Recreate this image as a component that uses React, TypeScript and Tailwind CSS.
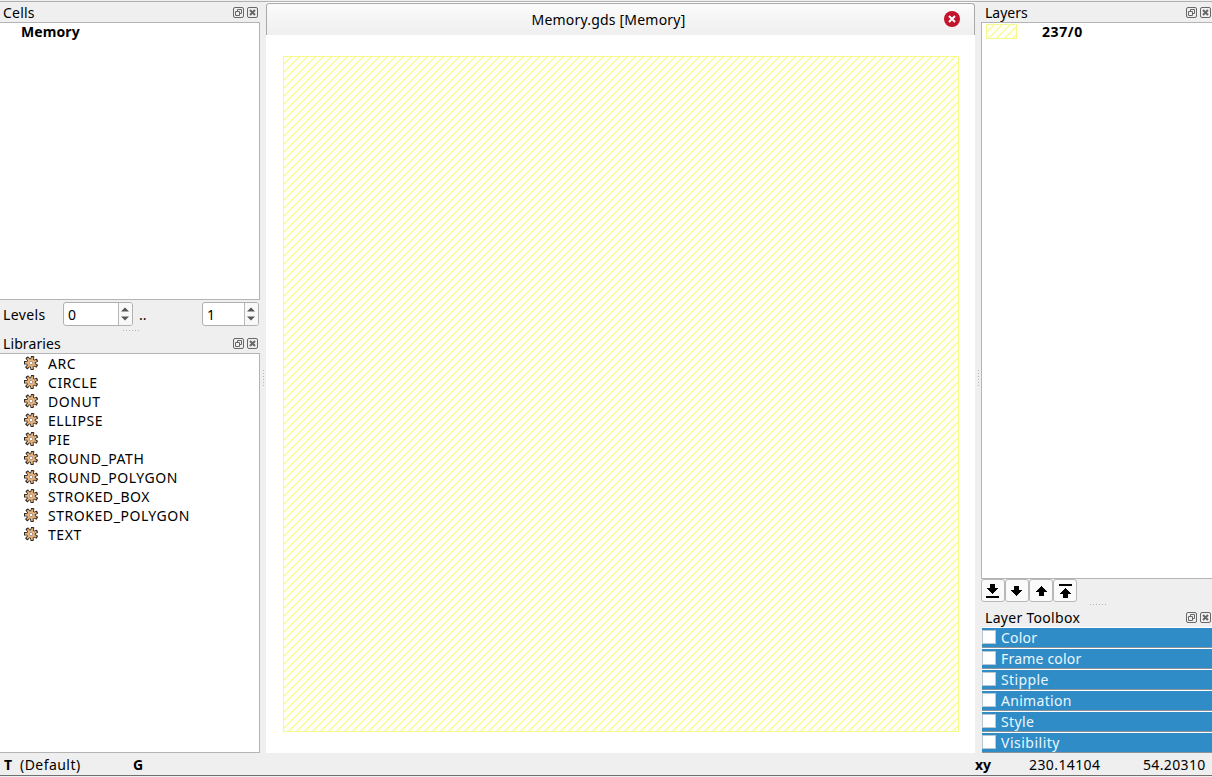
import React from "react";

const libraries = ["ARC", "CIRCLE", "DONUT", "ELLIPSE", "PIE", "ROUND_PATH", "ROUND_POLYGON", "STROKED_BOX", "STROKED_POLYGON", "TEXT"];
const sections = [
  { name: "Color", tracking: "tracking-[0.2px]" },
  { name: "Frame color", tracking: "tracking-[0.2px]" },
  { name: "Stipple", tracking: "tracking-[0.4px]" },
  { name: "Animation", tracking: "tracking-[0.3px]" },
  { name: "Style", tracking: "tracking-[0.4px]" },
  { name: "Visibility", tracking: "tracking-[0.5px]" },
];

function DockHeader({ title, className = "" }: { title: string; className?: string }) {
  return (
    <div className={`flex h-5 shrink-0 items-center justify-between pt-px ${className}`}>
      <span className="whitespace-nowrap leading-[19px]">{title}</span>
      <div className="flex gap-[3px]">
        <svg width="11" height="11" viewBox="0 0 11 11" fill="none" stroke="#686868">
          <rect x=".5" y=".5" width="10" height="10" rx="1.5" />
          <path d="M4.5 4V2.5h4v4H7M2.5 4.5h4v4h-4z" />
        </svg>
        <svg width="11" height="11" viewBox="0 0 11 11" fill="none" stroke="#686868">
          <rect x=".5" y=".5" width="10" height="10" rx="1.5" />
          <path d="M3 3l5 5M8 3L3 8" strokeWidth="2" />
        </svg>
      </div>
    </div>
  );
}

function Spin({ value, className }: { value: string; className: string }) {
  return (
    <div className={`flex h-6 overflow-hidden rounded-[3px] border border-[#b0b0b0] bg-white ${className}`}>
      <span className="flex-1 pl-[4px] leading-[23px]">{value}</span>
      <div className="flex w-[14px] items-center border-l border-[#b8b8b8] bg-[#f8f8f8] pl-[2px]">
        <svg width="8" height="14" viewBox="0 0 8 14" fill="#555">
          <path d="M0 4.5L4 .5l4 4zM0 9.5h8l-4 4z" />
        </svg>
      </div>
    </div>
  );
}

const toothAngles = [15, 66, 118, 169, 221, 272, 324];

function Gear() {
  return (
    <svg width="14" height="14" viewBox="0 0 14 14" className="mb-[2px] shrink-0">
      {toothAngles.map((a) => (
        <rect key={a} x="5.3" y="-.2" width="3.4" height="5" rx=".6" fill="#2e241b" transform={`rotate(${a} 7 7)`} />
      ))}
      <circle cx="7" cy="7" r="4.4" fill="#2e241b" />
      {toothAngles.map((a) => (
        <rect key={a} x="6.1" y="1" width="1.8" height="4" fill="#eab47e" transform={`rotate(${a} 7 7)`} />
      ))}
      <circle cx="7" cy="7" r="3.8" fill="#eab47e" />
      <rect x="5.5" y="5.5" width="3" height="3" rx=".8" fill="#fff" stroke="#8c8078" strokeWidth=".8" />
    </svg>
  );
}

function Dots({ vertical = false }: { vertical?: boolean }) {
  return (
    <svg width={vertical ? 2 : 17} height={vertical ? 17 : 2} fill="#b5b5b5">
      {[0, 3, 6, 9, 12, 15].map((p) => (
        <rect key={p} x={vertical ? 0 : p} y={vertical ? p : 0} width="1" height="1" />
      ))}
    </svg>
  );
}

function Hatch({ id, width, height }: { id: string; width: number; height: number }) {
  return (
    <svg width={width} height={height} className="block">
      <defs>
        <pattern id={id} width="8" height="8" patternUnits="userSpaceOnUse" x="1">
          <path d="M-1 9L9-1M-1 1L1-1M7 9l2-2" stroke="#f8fa7c" strokeWidth="1.1" />
        </pattern>
      </defs>
      <rect width={width} height={height} fill="#fffff9" />
      <rect width={width} height={height} fill={`url(#${id})`} />
      <rect x=".5" y=".5" width={width - 1} height={height - 1} fill="none" stroke="#f4f98c" />
    </svg>
  );
}

const arrows = [
  "M4 1h5v4h4L6.5 11 0 5h4zM0 13h13v2H0z",
  "M4 3h5v4h4l-6.5 6L0 7h4z",
  "M5 13h5V9h4L7.5 3 1 9h4z",
  "M5 15h5v-4h4L7.5 5 1 11h4zM1 1h13v2H1z",
];

export default function App() {
  return (
    <div className="flex h-[777px] w-[1212px] flex-col overflow-hidden bg-[#efefef] font-['Noto_Sans',sans-serif] text-[14px] text-black">
      <div className="mt-px h-px shrink-0 bg-[#b0b0b0]" />
      <div className="flex h-[751px] shrink-0">
        <aside className="flex w-[260px] flex-col">
          <DockHeader title="Cells" className="pl-[3px] pr-[2px] tracking-[0.2px]" />
          <div className="h-[278px] border-y border-r border-[#b4b4b4] bg-white">
            <div className="pl-[21px] font-bold leading-[18px] tracking-[0.1px]">Memory</div>
          </div>
          <div className="flex h-[29px] items-center pb-px pl-[3px]">
            <span className="w-[60px] pt-px tracking-[0.4px]">Levels</span>
            <Spin value="0" className="w-[70px]" />
            <span className="w-[69px] pl-[6px] pt-px">..</span>
            <Spin value="1" className="w-[57px]" />
          </div>
          <div className="flex h-[4px] justify-center pl-[2px] pt-px"><Dots /></div>
          <DockHeader title="Libraries" className="pl-[3px] pr-[2px] tracking-[0.1px]" />
          <div className="flex-1 border-y border-r border-[#b4b4b4] bg-white">
            {libraries.map((name) => (
              <div key={name} className="flex h-[19px] items-center gap-[10px] pl-[24px]">
                <Gear />
                <span className="whitespace-nowrap tracking-[0.55px]">{name}</span>
              </div>
            ))}
          </div>
        </aside>
        <div className="flex w-[6px] items-center justify-center pl-[2px] pt-[2px]"><Dots vertical /></div>
        <main className="flex w-[709px] flex-col bg-white">
          <div className="mt-px flex h-8 items-center rounded-t-[3px] border border-b-0 border-[#a9a9a9] bg-gradient-to-b from-[#fbfbfb] to-[#efefef] pr-[14px]">
            <span className="flex-1 pl-[6px] text-center tracking-[0.2px]">Memory.gds [Memory]</span>
            <svg width="16" height="16" viewBox="0 0 16 16" className="mb-[2px]">
              <circle cx="8" cy="8" r="8" fill="#c3142d" />
              <path d="M5 5l6 6M11 5l-6 6" stroke="#fff" strokeWidth="2" />
            </svg>
          </div>
          <div className="pl-[17px] pt-[21px]"><Hatch id="canvas-hatch" width={676} height={676} /></div>
        </main>
        <div className="flex w-[6px] items-center justify-center pl-[2px] pt-[2px]"><Dots vertical /></div>
        <aside className="flex w-[231px] flex-col">
          <DockHeader title="Layers" className="pl-[4px] pr-px" />
          <div className="h-[557px] shrink-0 border-y border-l border-[#b4b4b4] bg-white">
            <div className="flex h-[18px] items-start pl-[4px] pt-px">
              <Hatch id="swatch-hatch" width={31} height={15} />
              <span className="pl-[25px] font-bold leading-[15px] tracking-[0.6px]">237/0</span>
            </div>
          </div>
          <div className="flex h-[23px] shrink-0">
            {arrows.map((d) => (
              <div key={d} className="flex w-6 items-center justify-center rounded-[3px] border border-[#b8b8b8] bg-[#fafafa]">
                <svg width="15" height="16" viewBox="0 0 15 16" shapeRendering="crispEdges"><path d={d} /></svg>
              </div>
            ))}
          </div>
          <div className="flex h-[5px] shrink-0 justify-center pl-[3px] pt-[2px]"><Dots /></div>
          <DockHeader title="Layer Toolbox" className="pl-[4px] pr-px tracking-[0.3px]" />
          <div className="shrink-0">
            {sections.map(({ name, tracking }) => (
              <div key={name} className="ml-px flex h-[21px] items-center gap-[5px] border-b border-t border-b-[#8b9298] border-t-white bg-[#308cc6] text-[#e9f8ff]">
                <div className="mb-px h-[14px] w-[14px] border border-[#b8c6d0] bg-white" />
                <span className={`leading-[19px] ${tracking}`}>{name}</span>
              </div>
            ))}
          </div>
        </aside>
      </div>
      <footer className="flex h-[22px] shrink-0 items-center pl-[4px] pt-[2px] leading-[20px]">
        <b className="w-[16px]">T</b>
        <span className="w-[113px] tracking-[0.45px]">(Default)</span>
        <b className="w-[842px]">G</b>
        <b className="w-[54px]">xy</b>
        <span className="w-[114px] tracking-[0.4px]">230.14104</span>
        <span className="tracking-[0.35px]">54.20310</span>
      </footer>
      <div className="h-px shrink-0 bg-[#707070]" />
    </div>
  );
}
